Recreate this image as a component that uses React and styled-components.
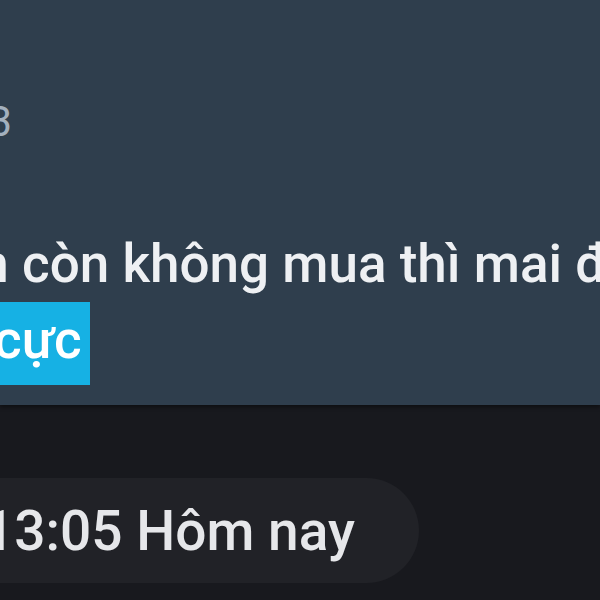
import * as React from 'react';
import styled, { createGlobalStyle } from "styled-components";

const GlobalStyle = createGlobalStyle`
  html, body {
    margin: 0;
    padding: 0;
    background: #18191e;
  }
`;

export default function App() {
  return (
    <>
      <GlobalStyle />
      <Screen>
        <Bubble>
          <Meta>23</Meta>
          <Message>
            <Line $shift={-79}>bạn còn không mua thì mai đắt lắm</Line>
            <Line $shift={-15}>
              <Mark>cực</Mark>
            </Line>
          </Message>
        </Bubble>
        <Footer>
          <TimePill>13:05 Hôm nay</TimePill>
        </Footer>
      </Screen>
    </>
  );
}

const Screen = styled.div`
  width: 600px;
  height: 600px;
  overflow: hidden;
  display: flex;
  flex-direction: column;
  background: #18191e;
  font-family: Roboto, "Noto Sans", sans-serif;
`;

const Bubble = styled.section`
  height: 405px;
  flex-shrink: 0;
  box-sizing: border-box;
  padding-top: 101px;
  background: #2f3e4d;
  box-shadow: 0 2px 4px rgba(0, 0, 0, 0.45);
  overflow: hidden;
`;

const Meta = styled.div`
  margin-left: -35px;
  font-size: 42px;
  line-height: 42px;
  color: #a3b0be;
`;

const Message = styled.div`
  margin-top: 83px;
  font-size: 53px;
  font-weight: 500;
  line-height: 76px;
  color: #eef0f3;
  white-space: nowrap;
`;

const Line = styled.div`
  margin-left: ${(p) => p.$shift}px;
`;

const Mark = styled.span`
  display: inline-block;
  height: 83px;
  padding: 0 8px 0 9px;
  background: #16b1e4;
  color: #ffffff;
  vertical-align: top;
`;

const Footer = styled.div`
  flex: 1;
  padding-top: 73px;
`;

const TimePill = styled.div`
  display: inline-flex;
  align-items: center;
  height: 105px;
  margin-left: -60px;
  padding: 0 64px 0 43px;
  border-radius: 53px;
  background: #212227;
  color: #e6e7ea;
  font-size: 55px;
  font-weight: 500;
  white-space: nowrap;
`;
